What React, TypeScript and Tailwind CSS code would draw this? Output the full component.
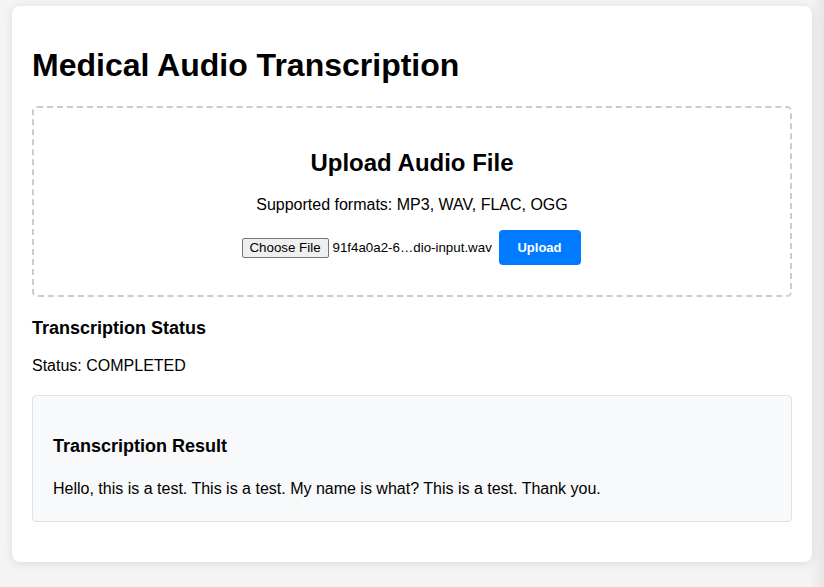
import React from "react";

export default function App() {
  return (
    <div className="min-h-[587px] bg-[#f4f4f4] pt-[6px] font-['Liberation_Sans',Arial,sans-serif] text-black relative">
      <div className="mx-auto w-[800px] rounded-lg bg-white px-5 pt-5 pb-[40px] shadow-[0_2px_10px_rgba(0,0,0,0.1)]">
        <h1 className="mt-[21px] mb-[22px] text-[32px] leading-[37px] font-bold">Medical Audio Transcription</h1>

        <div className="rounded-[5px] border-2 border-dashed border-[#cccccc] px-5 pt-[41px] pb-[30px] text-center">
          <h2 className="text-[24px] leading-[28px] font-bold">Upload Audio File</h2>
          <p className="mt-[19px] text-[16px] leading-[18px]">Supported formats: MP3, WAV, FLAC, OGG</p>
          <div className="mt-[16px] flex h-[35px] items-center justify-center">
            <div className="flex w-[253px] items-center">
              <span className="flex h-[20px] w-[87px] items-center justify-center rounded-[2px] border border-[#767676] bg-[#efefef] text-[13.33px] leading-none text-black">
                Choose File
              </span>
              <span className="ml-[4px] text-[13.33px] leading-none whitespace-nowrap">91f4a0a2-6…dio-input.wav</span>
            </div>
            <span className="ml-[4px] mr-[2px] flex h-[35px] w-[82px] items-center justify-center rounded-[4px] bg-[#007bff] text-[13px] font-bold text-white">
              Upload
            </span>
          </div>
        </div>

        <h3 className="mt-[21px] text-[18px] leading-[21px] font-bold">Transcription Status</h3>
        <p className="mt-[18px] text-[16px] leading-[18px]">Status: COMPLETED</p>

        <div className="mt-[20px] rounded-[4px] border border-[#dee2e6] bg-[#f8f9fa] px-5 pt-[40px] pb-[23px]">
          <h3 className="text-[18px] leading-[21px] font-bold">Transcription Result</h3>
          <p className="mt-[23px] text-[16px] leading-[18px]">
            Hello, this is a test. This is a test. My name is what? This is a test. Thank you.
          </p>
        </div>
      </div>
      <div className="pointer-events-none fixed top-0 right-0 h-full w-[14px] bg-gradient-to-r from-transparent to-[rgba(0,0,0,0.05)]" />
    </div>
  );
}
